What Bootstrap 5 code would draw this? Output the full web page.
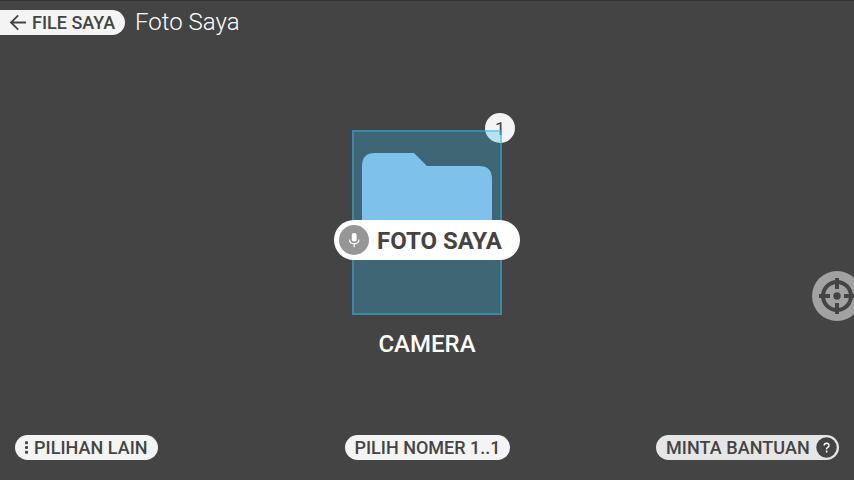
<!DOCTYPE html>
<html lang="id">
<head>
<meta charset="utf-8">
<meta name="viewport" content="width=device-width, initial-scale=1">
<title>Foto Saya</title>
<link href="https://cdn.jsdelivr.net/npm/bootstrap@5.3.0/dist/css/bootstrap.min.css" rel="stylesheet">
<style>
body{background:#444;color:#fff;font-family:Roboto,"Liberation Sans",sans-serif;height:480px;border-top:1px solid #333;border-bottom:3px solid #474245}
svg{display:block;flex:none}
.top-bar{height:129px;padding-top:9px}
.chip{height:25px;background:#f4f4f4;color:#444;font-size:18px;font-weight:500;line-height:25px;white-space:nowrap}
.chip-back{width:125px;padding-left:9px}
.chip-more{width:143px;padding-left:8px;letter-spacing:.04px}
.chip-pick{width:165px;padding-left:1px}
.chip-help{width:183px;padding-left:10px;background:#e6e6e6;letter-spacing:.06px}
.screen-title{font-size:24px;font-weight:300;line-height:25px;margin-left:10px}
.tile{width:150px;height:185px}
.tile-folder{left:10px;top:23px}
.tile-shade{inset:0;background:rgba(51,181,229,.3);border:2px solid rgba(51,181,229,.46)}
.tile-number{left:133px;top:-16.6px;width:30px;height:30px;background:#f4f4f4;color:#444;font-size:18px;line-height:32px}
.voice{left:-18px;top:90px;width:186px;height:40px;background:#fff;color:#444;font-size:24px;font-weight:700;line-height:40px;padding-left:5px}
.voice-text{padding-top:2px}
.voice-mic{width:30px;height:30px;background:#969696;margin-right:8px}
.tile-name{font-size:24px;font-weight:500;line-height:28px;margin-top:15px}
.target{left:812px;top:270px;width:42px;height:50px}
.bottom-bar{padding:0 15px 17px}
</style>
</head>
<body class="d-flex flex-column position-relative overflow-hidden">
<header class="top-bar d-flex align-items-start">
  <div class="chip chip-back rounded-end-pill d-flex align-items-center">
    <svg width="23" height="25" viewBox="0 0 23 25" fill="none" stroke="#444" stroke-width="1.8"><path d="M17 12.5H2.4M9.2 5.3L2 12.5l7.2 7.2"/></svg>
    <span>FILE SAYA</span>
  </div>
  <h1 class="screen-title mb-0">Foto Saya</h1>
</header>
<main class="flex-grow-1 d-flex flex-column align-items-center">
  <div class="tile position-relative">
    <div class="tile-number position-absolute rounded-circle text-center">1</div>
    <div class="tile-shade position-absolute"></div>
    <svg class="tile-folder position-absolute" width="130" height="80" viewBox="0 0 130 80"><path fill="#7ec2eb" d="M0 80V13Q0 0 13 0H52L65 13H117Q130 13 130 26V80Z"/></svg>
    <div class="voice position-absolute rounded-pill d-flex align-items-center">
      <span class="voice-mic rounded-circle d-flex align-items-center justify-content-center">
        <svg width="12" height="16" viewBox="0 0 12 16"><rect x="3.8" y="1" width="4.8" height="8.6" rx="2" fill="#fff"/><path d="M1.5 7.4C1.5 13 10.9 13 10.9 7.4M6.2 11.8v3.4" fill="none" stroke="#fff" stroke-width="1.2"/></svg>
      </span>
      <span class="voice-text">FOTO SAYA</span>
    </div>
  </div>
  <div class="tile-name">CAMERA</div>
</main>
<div class="target position-absolute overflow-hidden">
  <svg width="50" height="50" viewBox="0 0 50 50" fill="none" stroke="#444" stroke-width="4"><circle cx="25" cy="25" r="25" fill="#a2a2a2" stroke="none"/><circle cx="25" cy="25" r="14"/><path d="M25 7v11M25 32v11M7 25h11M32 25h11"/><circle cx="25" cy="25" r="3.7" fill="#444" stroke="none"/></svg>
</div>
<footer class="bottom-bar row gx-0">
  <div class="col d-flex justify-content-start">
    <div class="chip chip-more rounded-pill d-flex align-items-center">
      <svg width="11" height="25" viewBox="0 0 11 25" fill="#444"><rect x="2" y="6.3" width="3" height="3" rx="1"/><rect x="2" y="11" width="3" height="3" rx="1"/><rect x="2" y="15.7" width="3" height="3" rx="1"/></svg>
      <span>PILIHAN LAIN</span>
    </div>
  </div>
  <div class="col-auto">
    <div class="chip chip-pick rounded-pill text-center">PILIH NOMER 1..1</div>
  </div>
  <div class="col d-flex justify-content-end">
    <div class="chip chip-help rounded-pill d-flex align-items-center">
      <span>MINTA BANTUAN</span>
      <svg class="ms-auto" width="25" height="25" viewBox="0 0 25 25"><circle cx="12.5" cy="12.5" r="10.2" fill="#444"/><path d="M10.2 10.6Q10.2 8.3 12.6 8.3T15 10.4Q15 11.5 13.7 12.3T12.6 14.3M12.6 15.6v2" fill="none" stroke="#fff" stroke-width="1.5"/></svg>
    </div>
  </div>
</footer>
<script src="https://cdn.jsdelivr.net/npm/bootstrap@5.3.0/dist/js/bootstrap.bundle.min.js"></script>
</body>
</html>
